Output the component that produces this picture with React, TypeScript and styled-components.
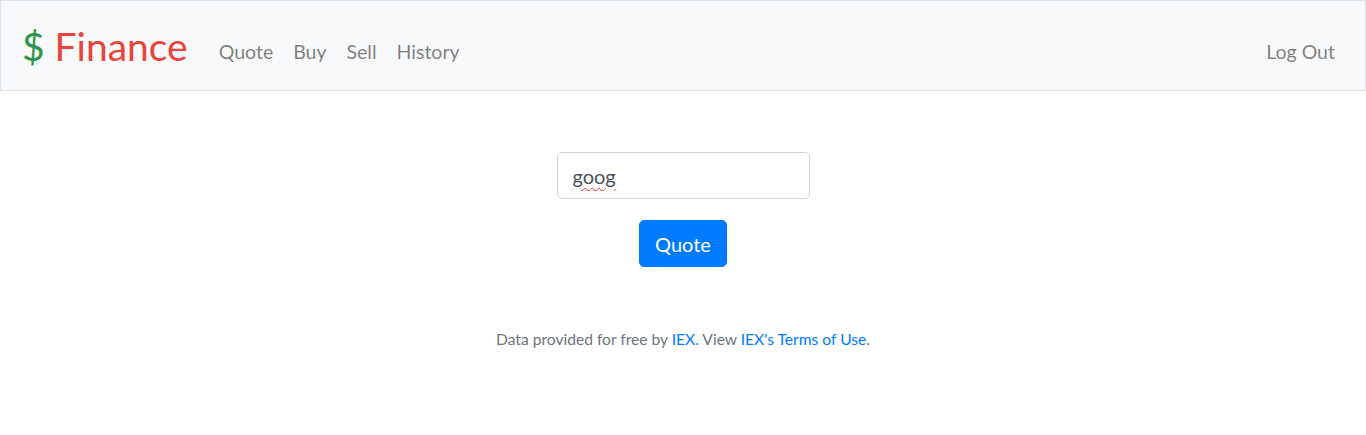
import React from "react";
import styled, { createGlobalStyle } from "styled-components";

const Global = createGlobalStyle`
  html, body { margin: 0; padding: 0; background: #fff; }
  body {
    font-family: Lato, "Open Sans", sans-serif;
    font-size: 20px;
    line-height: 1.5;
    color: #212529;
  }
  * { box-sizing: border-box; }
`;

const Nav = styled.nav`
  display: flex;
  align-items: center;
  height: 91px;
  padding: 0 20px;
  background: #f8f9fa;
  border: 1px solid #dee2e6;
`;

const Brand = styled.a`
  font-size: 39px;
  line-height: 57px;
  margin-right: 21px;
  padding-top: 2px;
  padding-left: 1px;
  text-decoration: none;
  white-space: nowrap;
`;

const Dollar = styled.span`
  color: #2e944b;
`;

const BrandWord = styled.span`
  color: #ea433b;
`;

const Links = styled.ul<{ $end?: boolean }>`
  display: flex;
  list-style: none;
  margin: 0 0 0 ${(p) => (p.$end ? "auto" : "0")};
  padding: 12px 0 0;
`;

const NavLink = styled.a`
  display: block;
  padding: 10px;
  font-size: 19.5px;
  line-height: 30px;
  color: rgba(0, 0, 0, 0.5);
  text-decoration: none;
`;

const Main = styled.main`
  padding: 61px 60px 60px;
  text-align: center;
`;

const FormGroup = styled.div`
  margin-bottom: 21px;
`;

const InputWrap = styled.span`
  position: relative;
  display: inline-block;
`;

const Input = styled.input`
  display: block;
  width: 253px;
  height: 47px;
  padding: 7.5px 15px;
  font-family: inherit;
  font-size: 20px;
  line-height: 30px;
  color: #495057;
  background: #fff;
  border: 1px solid #ced4da;
  border-radius: 5px;
  outline: none;
`;

const Squiggle = styled.span`
  position: absolute;
  left: 16px;
  top: 8.5px;
  font-size: 20px;
  line-height: 30px;
  color: transparent;
  text-decoration: underline wavy #d93025;
  text-decoration-thickness: 1px;
  text-underline-offset: 3px;
  pointer-events: none;
`;

const Button = styled.button`
  display: inline-block;
  height: 47px;
  padding: 7.5px 15px;
  font-family: inherit;
  font-size: 20px;
  line-height: 30px;
  color: #fff;
  background: #007bff;
  border: 1px solid #007bff;
  border-radius: 5px;
  cursor: pointer;
`;

const Footer = styled.footer`
  font-size: 15.6px;
  line-height: 24px;
  text-align: center;
  color: #6c757d;
`;

const FootLink = styled.a`
  color: #007bff;
  text-decoration: none;
`;

export default function App() {
  return (
    <>
      <Global />
      <Nav>
        <Brand href="#">
          <Dollar>$</Dollar> <BrandWord>Finance</BrandWord>
        </Brand>
        <Links>
          <li><NavLink href="#">Quote</NavLink></li>
          <li><NavLink href="#">Buy</NavLink></li>
          <li><NavLink href="#">Sell</NavLink></li>
          <li><NavLink href="#">History</NavLink></li>
        </Links>
        <Links $end>
          <li><NavLink href="#">Log Out</NavLink></li>
        </Links>
      </Nav>
      <Main>
        <form onSubmit={(e) => e.preventDefault()}>
          <FormGroup>
            <InputWrap>
              <Input
                autoComplete="off"
                name="symbol"
                placeholder="Symbol"
                type="text"
                defaultValue="goog"
                spellCheck={false}
              />
              <Squiggle aria-hidden="true">goog</Squiggle>
            </InputWrap>
          </FormGroup>
          <Button type="submit">Quote</Button>
        </form>
      </Main>
      <Footer>
        Data provided for free by <FootLink href="#">IEX</FootLink>. View{" "}
        <FootLink href="#">IEX's Terms of Use</FootLink>.
      </Footer>
    </>
  );
}
